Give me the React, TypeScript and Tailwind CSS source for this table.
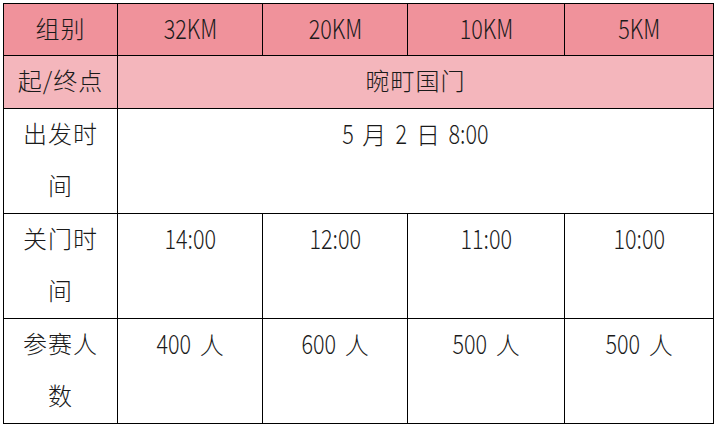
import React from "react";

// Font stack: CJK family carries both Latin digits and Chinese labels
const font = "font-['Noto_Sans_CJK_SC',sans-serif] font-light";

type CellProps = {
  children: React.ReactNode;
  bg?: string;
  span?: string;
  zh?: boolean;
};

// Chinese glyph inside a narrowed numeric cell: undo the horizontal squeeze
const Zh: React.FC<{ children: React.ReactNode }> = ({ children }) => (
  <span className="inline-block mx-[3px] scale-x-[1.25] text-[24px]">{children}</span>
);

// zh cells hold Chinese labels; others hold narrow numeric text
const Cell: React.FC<CellProps> = ({ children, bg = "bg-white", span = "", zh = false }) => (
  <div className={`${bg} ${span} border-r border-b border-black text-center text-[#1a1a1a] ${font}`}>
    {zh ? (
      <div className="relative -top-[2px] text-[24px] leading-[52px] tracking-[1px]">{children}</div>
    ) : (
      <div className="relative -top-[2px] text-[27px] leading-[52px]">
        <span className="inline-block scale-x-[0.8] [word-spacing:5px]">{children}</span>
      </div>
    )}
  </div>
);

const header = "bg-[#f0929b]";
const sub = "bg-[#f4b6bc]";

const App: React.FC = () => {
  const groups: string[] = ["32KM", "20KM", "10KM", "5KM"];
  const closing: string[] = ["14:00", "12:00", "11:00", "10:00"];
  const people: string[] = ["400", "600", "500", "500"];

  return (
    <main className="w-[717px] h-[426px] bg-white pl-[3px] pt-[3px]">
      <div className="grid grid-cols-[114px_145px_145px_157px_149px] grid-rows-[52px_53px_105px_105px_105px] w-fit border-l border-t border-black">
        {/* HEADER */}
        <Cell bg={header} zh>组别</Cell>
        {groups.map((g) => (
          <Cell bg={header} key={g}>{g}</Cell>
        ))}

        {/* START / FINISH */}
        <Cell bg={sub} zh>起/终点</Cell>
        <Cell bg={sub} span="col-span-4" zh>晼町国门</Cell>

        {/* START TIME */}
        <Cell zh>出发时<br />间</Cell>
        <Cell span="col-span-4">
          5 <Zh>月</Zh> 2 <Zh>日</Zh> 8:00
        </Cell>

        {/* CLOSING TIME */}
        <Cell zh>关门时<br />间</Cell>
        {closing.map((c, i) => (
          <Cell key={i}>{c}</Cell>
        ))}

        {/* PARTICIPANTS */}
        <Cell zh>参赛人<br />数</Cell>
        {people.map((p, i) => (
          <Cell key={i}>
            {p} <Zh>人</Zh>
          </Cell>
        ))}
      </div>
    </main>
  );
};

export default App;
